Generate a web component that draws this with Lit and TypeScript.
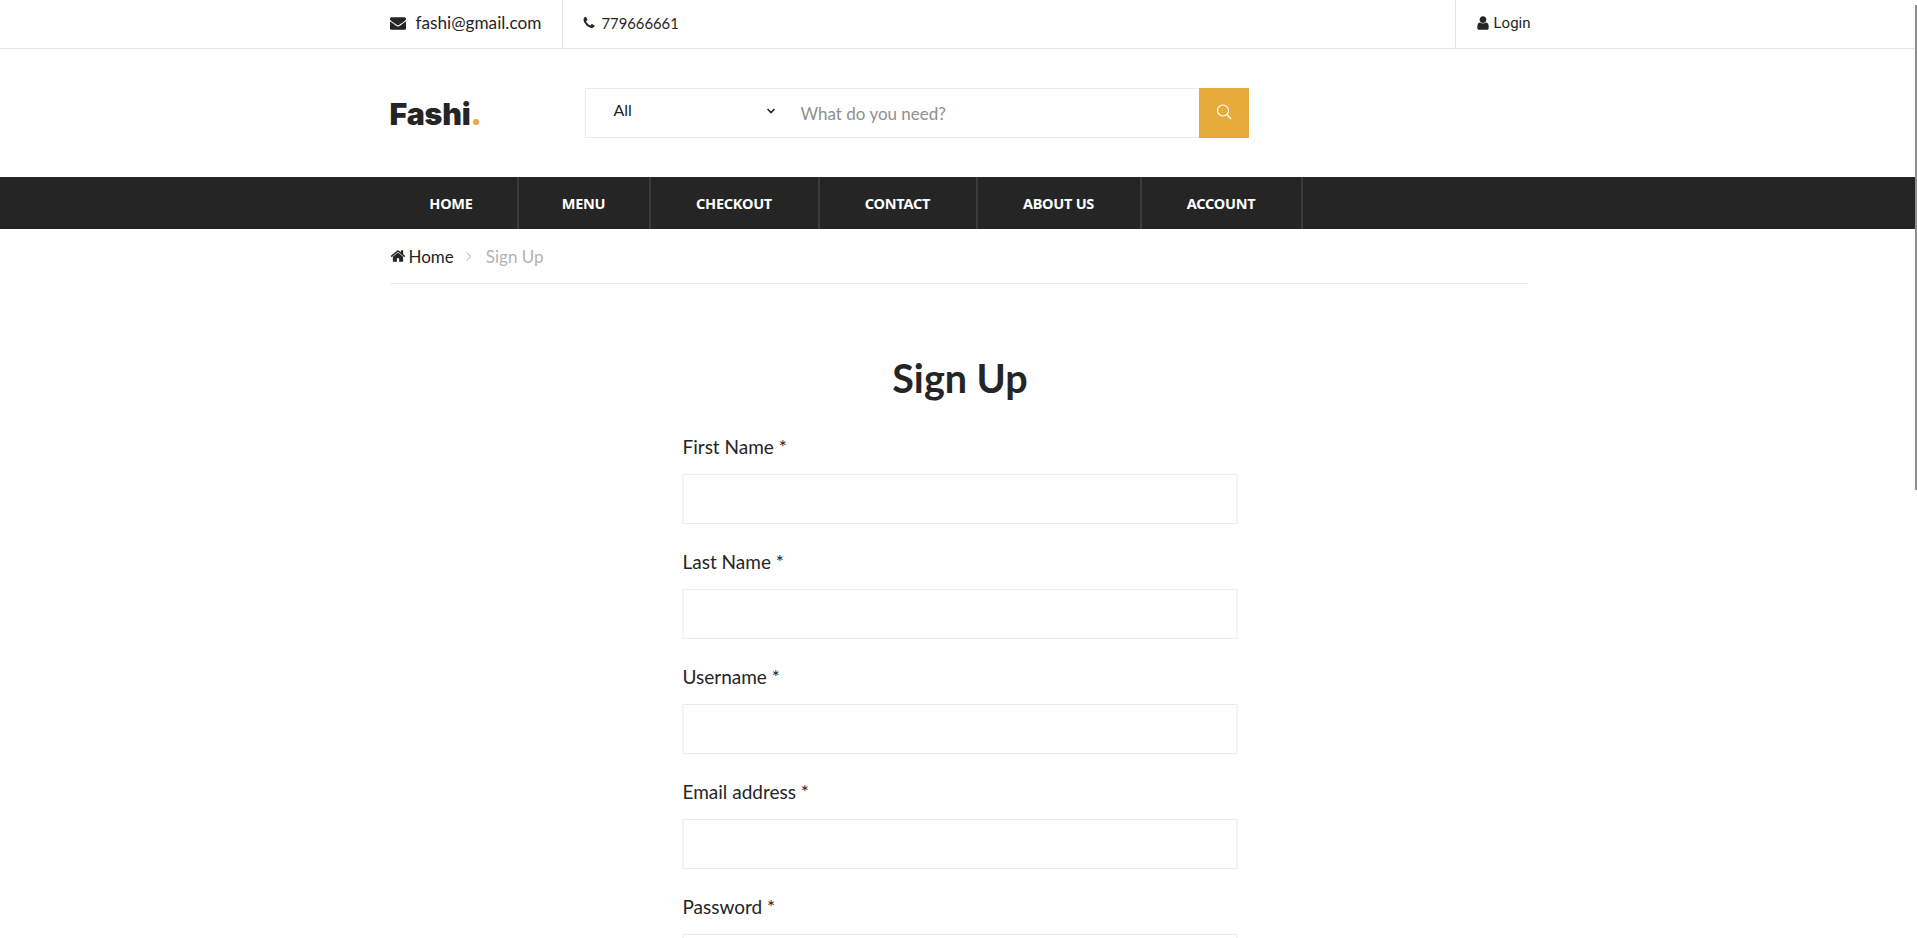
import { LitElement, html, css, svg } from "lit";
import { customElement } from "lit/decorators.js";

const ICONS: Record<string, string> = {
  envelope: "M1792 710v794q0 66-47 113t-113 47h-1472q-66 0-113-47t-47-113v-794q44 49 101 87 362 246 497 345 57 42 92.5 65.5t94.5 48 110 24.5h2q51 0 110-24.5t94.5-48 92.5-65.5q170-123 498-345 57-39 100-87zm0-294q0 79-49 151t-122 123q-376 261-468 325-10 7-42.5 30.5t-54 38-52 32.5-57.5 27-50 9h-2q-23 0-50-9t-57.5-27-52-32.5-54-38-42.5-30.5q-91-64-262-182.5t-205-142.5q-62-42-117-115.5t-55-136.5q0-78 41.5-130t118.5-52h1472q65 0 112.5 47t47.5 113z",
  phone: "M1600 1240q0 27-10 70.5t-21 68.5q-21 50-122 106-94 51-186 51-27 0-53-3.5t-57.5-12.5-47-14.5-55.5-20.5-49-18q-98-35-175-83-127-79-264-216t-216-264q-48-77-83-175-3-9-18-49t-20.5-55.5-14.5-47-12.5-57.5-3.5-53q0-92 51-186 56-101 106-122 25-11 68.5-21t70.5-10q14 0 21 3 18 6 53 76 11 19 30 54t35 63.5 31 53.5q3 4 17.5 25t21.5 35.5 7 28.5q0 20-28.5 50t-62 55-62 53-28.5 46q0 9 5 22.5t8.5 20.5 14 24 11.5 19q76 137 174 235t235 174q2 1 19 11.5t24 14 20.5 8.5 22.5 5q18 0 46-28.5t53-62 55-62 50-28.5q14 0 28.5 7t35.5 21.5 25 17.5q25 15 53.5 31t63.5 35 54 30q70 35 76 53 3 7 3 21z",
  user: "M1536 1399q0 109-62.5 187t-150.5 78h-854q-88 0-150.5-78t-62.5-187q0-85 8.5-160.5t31.5-152 58.5-131 94-89 134.5-34.5q131 128 313 128t313-128q76 0 134.5 34.5t94 89 58.5 131 31.5 152 8.5 160.5zm-256-887q0 159-112.5 271.5t-271.5 112.5-271.5-112.5-112.5-271.5 112.5-271.5 271.5-112.5 271.5 112.5 112.5 271.5z",
  home: "M1472 992v480q0 26-19 45t-45 19h-384v-384h-256v384h-384q-26 0-45-19t-19-45v-480q0-1 .5-3t.5-3l575-474 575 474q1 2 1 6zm223-69l-62 74q-8 9-21 11h-3q-13 0-21-7l-692-577-692 577q-12 8-24 7-13-2-21-11l-62-74q-8-10-7-23.5t11-21.5l719-599q32-26 76-26t76 26l244 204v-195q0-14 9-23t23-9h192q14 0 23 9t9 23v408l219 182q10 8 11 21.5t-7 23.5z",
};

const fa = (name: string, cls: string) => html`<svg class=${cls} viewBox="0 0 1792 1792" fill="currentColor">${svg`<path d=${ICONS[name]}></path>`}</svg>`;

const NAV: [string, number][] = [["HOME", 129], ["MENU", 132], ["CHECKOUT", 169], ["CONTACT", 158], ["ABOUT US", 164], ["ACCOUNT", 161]];
const FIELDS = [
  ["First Name *", "text"],
  ["Last Name *", "text"],
  ["Username *", "text"],
  ["Email address *", "email"],
  ["Password *", "password"],
];

@customElement("app-root")
export class AppRoot extends LitElement {
  static styles = css`
    :host { display: block; height: 938px; overflow: hidden; position: relative; background: #fff; color: #252525; font-family: "Lato", "Noto Sans", sans-serif; }
    * { box-sizing: border-box; }
    svg { flex: none; }
    .wrap { width: 1138px; margin: 0 auto; display: flex; align-items: center; }
    .top { height: 49px; border-bottom: 1px solid #e5e5e5; }
    .top .wrap { height: 48px; font-size: 17.2px; }
    .cell { height: 48px; display: flex; align-items: center; padding-bottom: 3px; }
    .mail { width: 173px; border-right: 1px solid #e5e5e5; }
    .mail svg { width: 16px; height: 16px; margin-right: 10px; margin-top: 1px; }
    .phone { padding-left: 19px; flex: 1; font-size: 14.8px; padding-bottom: 3px; }
    .phone svg { width: 14px; height: 14px; margin-right: 6px; }
    .login { border-left: 1px solid #e5e5e5; width: 73px; padding-left: 19px; font-family: "Roboto", sans-serif; font-size: 15px; padding-bottom: 2px; white-space: nowrap; }
    .login svg { width: 16px; height: 16px; margin-right: 3px; }
    .head { height: 128px; }
    .head .wrap { height: 128px; }
    .logo { width: 195px; font-family: "Inter", sans-serif; font-size: 30.3px; font-weight: 900; line-height: 1; letter-spacing: -0.2px; padding-top: 3px; }
    .logo span { color: #e7ab3c; }
    .search { width: 664px; height: 50px; display: flex; border: 1px solid #ebebeb; border-right: none; }
    .sel { width: 215px; display: flex; align-items: center; justify-content: space-between; padding: 0 25px 8px 28px; font-size: 16px; }
    .sel svg { width: 10px; height: 8px; margin-top: 3px; }
    .ph { flex: 1; border: none; outline: none; padding: 0; font: inherit; font-size: 17px; color: #252525; min-width: 0; }
    .ph::placeholder { color: #8f8f8f; opacity: 1; }
    .btn { width: 50px; height: 50px; margin: -1px 0; background: #e7ab3c; border: none; display: flex; align-items: center; justify-content: center; padding: 0 0 3px; }
    .btn svg { width: 16px; height: 18px; }
    nav { height: 52px; background: #252525; }
    nav .wrap { height: 52px; align-items: stretch; }
    .item { display: flex; align-items: center; justify-content: center; border-right: 2px solid #3b3b3b; color: #fff; font-family: "Noto Sans", sans-serif; font-size: 14.5px; font-weight: 700; letter-spacing: -0.25px; white-space: nowrap; }
    .item:first-child { padding-right: 4px; }
    .crumb .wrap { height: 55px; border-bottom: 1px solid #ebebeb; font-size: 17px; }
    .crumb svg { width: 16px; height: 16px; margin-right: 3px; }
    .crumb .sep { width: 8px; height: 11px; margin: 0 13px 0 11px; color: #b2b2b2; }
    .cur { color: #b2b2b2; }
    h2 { margin: 0; padding: 69px 0 0 3px; text-align: center; font-size: 39.5px; font-weight: 700; line-height: 50px; color: #252525; }
    form { width: 555px; margin: 0 auto; padding-top: 31px; transform: translateX(1.5px); }
    .field { height: 115px; }
    label { display: block; font-size: 19px; line-height: 26px; height: 40px; }
    input.box { display: block; width: 100%; height: 50px; border: 1px solid #ebebeb; outline: none; background: #fff; }
    .thumb { position: fixed; top: 5px; right: 0; width: 2px; height: 485px; background: #8e8e8e; }
  `;

  render() {
    return html`
      <div class="top"><div class="wrap">
        <div class="cell mail">${fa("envelope", "")}fashi@gmail.com</div>
        <div class="cell phone">${fa("phone", "")}779666661</div>
        <div class="cell login">${fa("user", "")}Login</div>
      </div></div>
      <header class="head"><div class="wrap">
        <div class="logo">Fashi<span>.</span></div>
        <div class="search">
          <div class="sel">All <svg viewBox="0 0 10 8" fill="none" stroke="#252525" stroke-width="1.6"><path d="M1.5 2 L5 5.5 L8.5 2"></path></svg></div>
          <input class="ph" placeholder="What do you need?" />
          <button class="btn" aria-label="Search"><svg viewBox="0 0 16 18" fill="none" stroke="#fff" stroke-width="1.2"><circle cx="7" cy="7.5" r="5.5"></circle><path d="M11 11.5 L15 16"></path></svg></button>
        </div>
      </div></header>
      <nav><div class="wrap">${NAV.map(([n, w]) => html`<div class="item" style="width:${w}px">${n}</div>`)}</div></nav>
      <div class="crumb"><div class="wrap">
        ${fa("home", "")}<span>Home</span>
        <svg class="sep" viewBox="0 0 8 10" fill="none" stroke="currentColor" stroke-width="1"><path d="M1.5 1 L6 5 L1.5 9"></path></svg>
        <span class="cur">Sign Up</span>
      </div></div>
      <h2>Sign Up</h2>
      <form>
        ${FIELDS.map(([l, t]) => html`<div class="field"><label>${l}</label><input class="box" type=${t} /></div>`)}
      </form>
      <div class="thumb"></div>
    `;
  }
}
